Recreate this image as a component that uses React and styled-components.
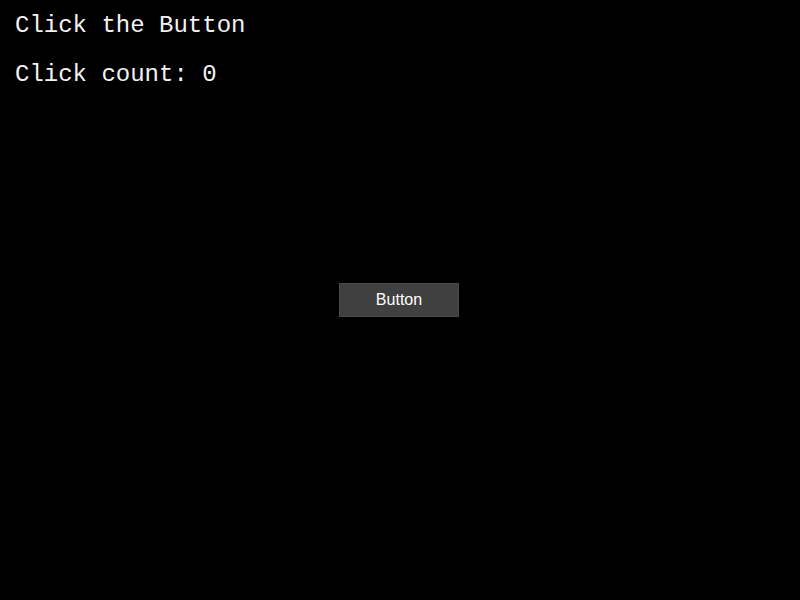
import React, { useState } from "react";
import styled, { createGlobalStyle } from "styled-components";

const Global = createGlobalStyle`
  html, body { margin: 0; padding: 0; background: #000; }
  #root { min-height: 100vh; }
`;

const Page = styled.div`
  display: grid;
  height: 100vh;
  background: #000;
  color: #fff;
`;

const Header = styled.div`
  grid-area: 1 / 1;
  align-self: start;
  padding: 12px 15px;
  font-family: "Liberation Mono", "DejaVu Sans Mono", monospace;
  font-size: 24px;
  line-height: 27px;
  color: #f2f2f2;
  display: flex;
  flex-direction: column;
  gap: 22px;
`;

const Line = styled.div``;

const Btn = styled.button`
  grid-area: 1 / 1;
  place-self: center;
  margin-right: 2px;
  width: 120px;
  height: 34px;
  background: #404040;
  color: #fff;
  border: 1px solid #4a4a4a;
  font-family: "Liberation Sans", Arial, sans-serif;
  font-size: 16px;
  cursor: pointer;
  padding: 0;
`;

export default function App() {
  const [count, setCount] = useState(0);
  return (
    <Page>
      <Global />
      <Header>
        <Line>Click the Button</Line>
        <Line>Click count: {count}</Line>
      </Header>
      <Btn onClick={() => setCount(count + 1)}>Button</Btn>
    </Page>
  );
}
